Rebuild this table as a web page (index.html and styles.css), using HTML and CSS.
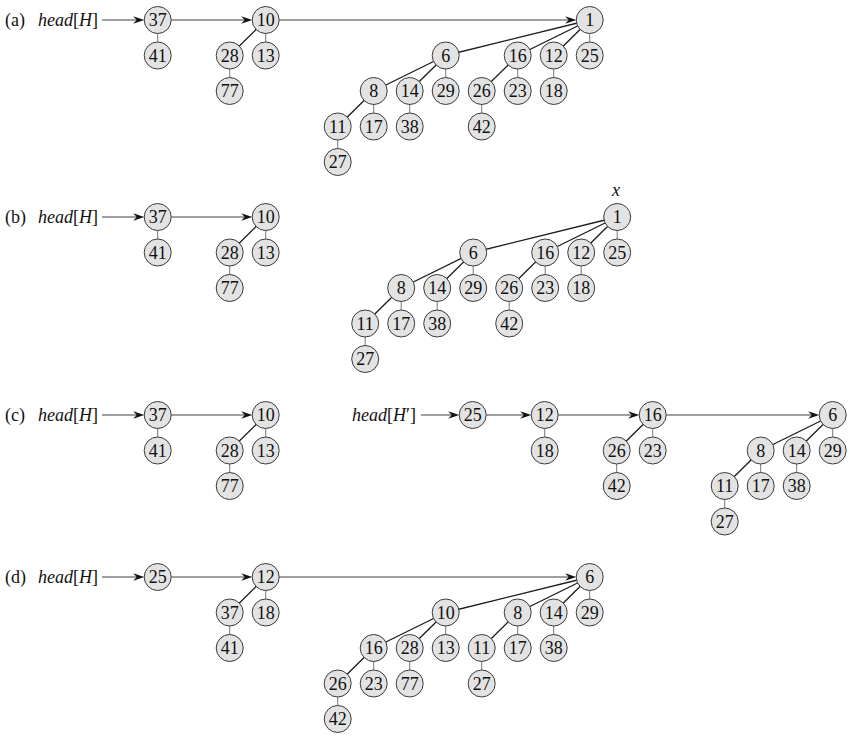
FILE: index.html
```html
<!DOCTYPE html>
<html lang="en">
<head>
<meta charset="utf-8">
<title>Binomial heap union</title>
<link rel="stylesheet" href="styles.css">
</head>
<body>
<main class="figure">
  <svg id="panel-a" class="panel panel-a" viewBox="0 0 850 180" xmlns="http://www.w3.org/2000/svg">
    <text class="tag" x="5" y="26">(a)</text>
    <text class="head" x="38" y="26"><tspan class="it">head</tspan>[<tspan class="it">H</tspan>]</text>
  </svg>
  <svg id="panel-b" class="panel panel-b" viewBox="0 180 850 200" xmlns="http://www.w3.org/2000/svg">
    <text class="tag" x="5" y="223">(b)</text>
    <text class="head" x="38" y="223"><tspan class="it">head</tspan>[<tspan class="it">H</tspan>]</text>
    <text class="var" x="616" y="196">x</text>
  </svg>
  <svg id="panel-c" class="panel panel-c" viewBox="0 380 850 165" xmlns="http://www.w3.org/2000/svg">
    <text class="tag" x="5" y="421">(c)</text>
    <text class="head" x="38" y="421"><tspan class="it">head</tspan>[<tspan class="it">H</tspan>]</text>
    <text class="head" x="352" y="421"><tspan class="it">head</tspan>[<tspan class="it">H</tspan>′]</text>
  </svg>
  <svg id="panel-d" class="panel panel-d" viewBox="0 545 850 193" xmlns="http://www.w3.org/2000/svg">
    <text class="tag" x="5" y="583">(d)</text>
    <text class="head" x="38" y="583"><tspan class="it">head</tspan>[<tspan class="it">H</tspan>]</text>
  </svg>
</main>
<script src="diagram.js"></script>
</body>
</html>
```

FILE: styles.css
```css
html, body {
  margin: 0;
  padding: 0;
  background: #ffffff;
}

.figure {
  display: flex;
  flex-direction: column;
  width: 850px;
}

.panel {
  display: block;
  width: 850px;
  overflow: visible;
}

.panel-a { height: 180px; }
.panel-b { height: 200px; }
.panel-c { height: 165px; }
.panel-d { height: 193px; }

.tag,
.head,
.var,
.node text {
  font-family: "Liberation Serif", "Times New Roman", serif;
  font-size: 18px;
  fill: #111111;
}

.it,
.var {
  font-style: italic;
}

.var {
  text-anchor: middle;
}

.node circle {
  fill: #e3e3e3;
  stroke: #3a3a3a;
  stroke-width: 1;
}

.node text {
  text-anchor: middle;
}

.edge-v {
  stroke: #777777;
  stroke-width: 1;
}

.edge-d {
  stroke: #1a1a1a;
  stroke-width: 1.3;
}

.link {
  stroke: #404040;
  stroke-width: 1;
}

.arrowhead {
  fill: #111111;
}
```

FILE: diagram.js
```js
(function () {
  var NS = 'http://www.w3.org/2000/svg';
  var R = 13.5, DX = 36, DY = 35.5;

  function el(tag, attrs, parent) {
    var e = document.createElementNS(NS, tag);
    for (var k in attrs) e.setAttribute(k, attrs[k]);
    parent.appendChild(e);
    return e;
  }
  function T(key, col, row, kids) {
    return { key: key, col: col, row: row, kids: kids || [] };
  }
  function bigTree() {
    return T(1, 12, 0, [
      T(6, 8, 1, [
        T(8, 6, 2, [T(11, 5, 3, [T(27, 5, 4)]), T(17, 6, 3)]),
        T(14, 7, 2, [T(38, 7, 3)]),
        T(29, 8, 2)
      ]),
      T(16, 10, 1, [T(26, 9, 2, [T(42, 9, 3)]), T(23, 10, 2)]),
      T(12, 11, 1, [T(18, 11, 2)]),
      T(25, 12, 1)
    ]);
  }
  function leftPair() {
    return [
      T(37, 0, 0, [T(41, 0, 1)]),
      T(10, 3, 0, [T(28, 2, 1, [T(77, 2, 2)]), T(13, 3, 1)])
    ];
  }

  var panels = [
    { id: 'panel-a', y0: 20, lists: [
      { from: 102, bx: 157.7, roots: leftPair().concat([bigTree()]) }
    ] },
    { id: 'panel-b', y0: 217, lists: [
      { from: 102, bx: 157.7, roots: leftPair() },
      { from: null, bx: 185.2, roots: [bigTree()] }
    ] },
    { id: 'panel-c', y0: 415, lists: [
      { from: 102, bx: 157.7, roots: leftPair() },
      { from: 421, bx: 472.7, roots: [
        T(25, 0, 0),
        T(12, 2, 0, [T(18, 2, 1)]),
        T(16, 5, 0, [T(26, 4, 1, [T(42, 4, 2)]), T(23, 5, 1)]),
        T(6, 10, 0, [
          T(8, 8, 1, [T(11, 7, 2, [T(27, 7, 3)]), T(17, 8, 2)]),
          T(14, 9, 1, [T(38, 9, 2)]),
          T(29, 10, 1)
        ])
      ] }
    ] },
    { id: 'panel-d', y0: 577, lists: [
      { from: 102, bx: 157.7, roots: [
        T(25, 0, 0),
        T(12, 3, 0, [T(37, 2, 1, [T(41, 2, 2)]), T(18, 3, 1)]),
        T(6, 12, 0, [
          T(10, 8, 1, [
            T(16, 6, 2, [T(26, 5, 3, [T(42, 5, 4)]), T(23, 6, 3)]),
            T(28, 7, 2, [T(77, 7, 3)]),
            T(13, 8, 2)
          ]),
          T(8, 10, 1, [T(11, 9, 2, [T(27, 9, 3)]), T(17, 10, 2)]),
          T(14, 11, 1, [T(38, 11, 2)]),
          T(29, 12, 1)
        ])
      ] }
    ] }
  ];

  function place(n, bx, y0) {
    n.x = bx + n.col * DX;
    n.y = y0 + n.row * DY;
    n.kids.forEach(function (k) { place(k, bx, y0); });
  }
  function drawEdges(n, g) {
    n.kids.forEach(function (k) {
      var vertical = Math.abs(k.x - n.x) < 0.5;
      el('line', { x1: n.x, y1: n.y, x2: k.x, y2: k.y,
        'class': vertical ? 'edge-v' : 'edge-d' }, g);
      drawEdges(k, g);
    });
  }
  function drawNodes(n, g) {
    var ng = el('g', { 'class': 'node' }, g);
    el('circle', { cx: n.x, cy: n.y, r: R }, ng);
    var t = el('text', { x: n.x, y: n.y + 6.2 }, ng);
    t.textContent = String(n.key);
    n.kids.forEach(function (k) { drawNodes(k, g); });
  }
  function arrow(x1, x2, y, g) {
    el('line', { x1: x1, y1: y, x2: x2 - 6, y2: y, 'class': 'link' }, g);
    el('path', { d: 'M' + x2 + ',' + y + ' L' + (x2 - 11) + ',' + (y - 3.8) +
      ' L' + (x2 - 7.5) + ',' + y + ' L' + (x2 - 11) + ',' + (y + 3.8) + ' Z',
      'class': 'arrowhead' }, g);
  }

  panels.forEach(function (p) {
    var svg = document.getElementById(p.id);
    var gEdges = el('g', { 'class': 'edges' }, svg);
    var gLinks = el('g', { 'class': 'links' }, svg);
    var gNodes = el('g', { 'class': 'nodes' }, svg);
    p.lists.forEach(function (l) {
      l.roots.forEach(function (r) { place(r, l.bx, p.y0); });
      if (l.from !== null) arrow(l.from, l.roots[0].x - R, p.y0, gLinks);
      for (var i = 1; i < l.roots.length; i++) {
        arrow(l.roots[i - 1].x + R, l.roots[i].x - R, p.y0, gLinks);
      }
      l.roots.forEach(function (r) { drawEdges(r, gEdges); drawNodes(r, gNodes); });
    });
  });
})();
```
